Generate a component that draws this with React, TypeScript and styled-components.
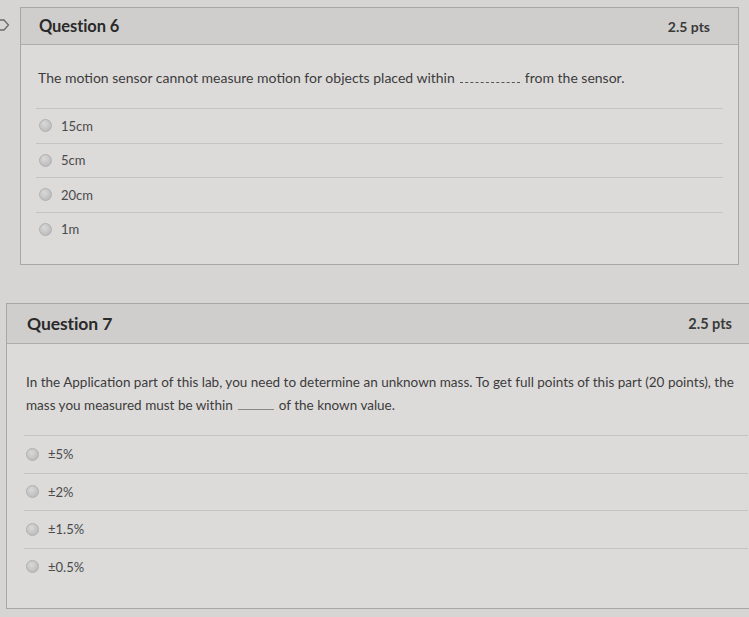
import * as React from "react";
import styled, { createGlobalStyle } from "styled-components";

const GlobalStyle = createGlobalStyle`
  html, body {
    margin: 0;
    padding: 0;
    background: #d6d5d4;
    overflow: hidden;
  }
  body {
    font-family: Lato, "Open Sans", "Liberation Sans", sans-serif;
    color: #333;
  }
`;

const Page = styled.div`
  width: 749px;
  height: 617px;
  padding-top: 7px;
  box-sizing: border-box;
  display: flex;
  flex-direction: column;
  gap: 38px;
`;

const Row = styled.div<{ $left: number }>`
  display: flex;
  align-items: flex-start;
  padding-left: ${(p) => p.$left}px;
`;

const Flag = styled.svg`
  flex: none;
  margin-top: 11px;
  margin-left: -4px;
  margin-right: 10px;
`;

const Card = styled.section<{ $width: number }>`
  width: ${(p) => p.$width}px;
  flex: none;
  background: #dcdbda;
  border: 1px solid #a8a7a6;
  box-sizing: border-box;
`;

const Header = styled.header<{ $height: number; $left: number; $right: number }>`
  height: ${(p) => p.$height}px;
  display: flex;
  align-items: center;
  justify-content: space-between;
  padding: 0 ${(p) => p.$right}px 0 ${(p) => p.$left}px;
  background: #cfcecd;
  border-bottom: 1px solid #aeadac;
  box-sizing: border-box;
`;

const Title = styled.h2<{ $size: number }>`
  margin: 0;
  font-size: ${(p) => p.$size}px;
  font-weight: 700;
  color: #2a2a2a;
  letter-spacing: -0.1px;
`;

const Points = styled.span<{ $size: number }>`
  font-size: ${(p) => p.$size}px;
  font-weight: 700;
  color: #3a3a3a;
`;

const Body = styled.div<{ $pad: number; $top: number; $bottom: number }>`
  padding: ${(p) => p.$top}px ${(p) => p.$pad}px ${(p) => p.$bottom}px;
`;

const Text = styled.p<{ $size: number; $line: number; $indent: number }>`
  margin: 0 0 0 ${(p) => p.$indent}px;
  font-size: ${(p) => p.$size}px;
  line-height: ${(p) => p.$line}px;
  color: #3c3c3c;
  white-space: nowrap;
`;

const Blank = styled.span<{ $width: number }>`
  display: inline-block;
  width: ${(p) => p.$width}px;
  margin: 0 5px;
  border-bottom: 1px dashed #555;
  vertical-align: baseline;
`;

const SolidBlank = styled(Blank)`
  border-bottom-style: solid;
  border-bottom-color: #888;
`;

const Answers = styled.ul<{ $top: number }>`
  list-style: none;
  margin: ${(p) => p.$top}px 0 0;
  padding: 0;
`;

const Answer = styled.li<{ $height: number; $indent: number }>`
  height: ${(p) => p.$height}px;
  display: flex;
  align-items: center;
  gap: 9px;
  padding-left: ${(p) => p.$indent}px;
  border-top: 1px solid #c5c4c3;
  font-size: 13px;
  color: #4a4a4a;
  box-sizing: border-box;
`;

const Radio = styled.span`
  width: 11px;
  height: 11px;
  border-radius: 50%;
  background: radial-gradient(circle at 40% 35%, #d9d9d9, #b3b3b3);
  border: 1px solid #b0b0b0;
  flex: none;
`;

const q6Answers = ["15cm", "5cm", "20cm", "1m"];
const q7Answers = ["±5%", "±2%", "±1.5%", "±0.5%"];

function App() {
  return (
    <>
      <GlobalStyle />
      <Page>
        <Row $left={0}>
          <Flag width="14" height="14" viewBox="0 0 14 14">
            <path d="M0 2 H8 L12.5 7 L8 12 H0 Z" fill="none" stroke="#6b6b6b" strokeWidth="1.3" />
          </Flag>
          <Card $width={719}>
            <Header $height={37} $left={18} $right={28}>
              <Title $size={16.5}>Question 6</Title>
              <Points $size={14}>2.5 pts</Points>
            </Header>
            <Body $pad={15} $top={24} $bottom={18}>
              <Text $size={14} $line={18} $indent={2}>
                The motion sensor cannot measure motion for objects placed within
                <Blank $width={60} />
                from the sensor.
              </Text>
              <Answers $top={21}>
                {q6Answers.map((a) => (
                  <Answer key={a} $height={34.5} $indent={3}>
                    <Radio />
                    {a}
                  </Answer>
                ))}
              </Answers>
            </Body>
          </Card>
        </Row>
        <Row $left={6}>
          <Card $width={760}>
            <Header $height={40} $left={20} $right={33}>
              <Title $size={17.5}>Question 7</Title>
              <Points $size={14.5}>2.5 pts</Points>
            </Header>
            <Body $pad={17} $top={27} $bottom={23}>
              <Text $size={13.5} $line={23} $indent={2}>
                In the Application part of this lab, you need to determine an unknown mass. To get full
                points of this part (20 points), the
                <br />
                mass you measured must be within
                <SolidBlank $width={36} />
                of the known value.
              </Text>
              <Answers $top={18}>
                {q7Answers.map((a) => (
                  <Answer key={a} $height={37.5} $indent={2}>
                    <Radio />
                    {a}
                  </Answer>
                ))}
              </Answers>
            </Body>
          </Card>
        </Row>
      </Page>
    </>
  );
}

export default App;
